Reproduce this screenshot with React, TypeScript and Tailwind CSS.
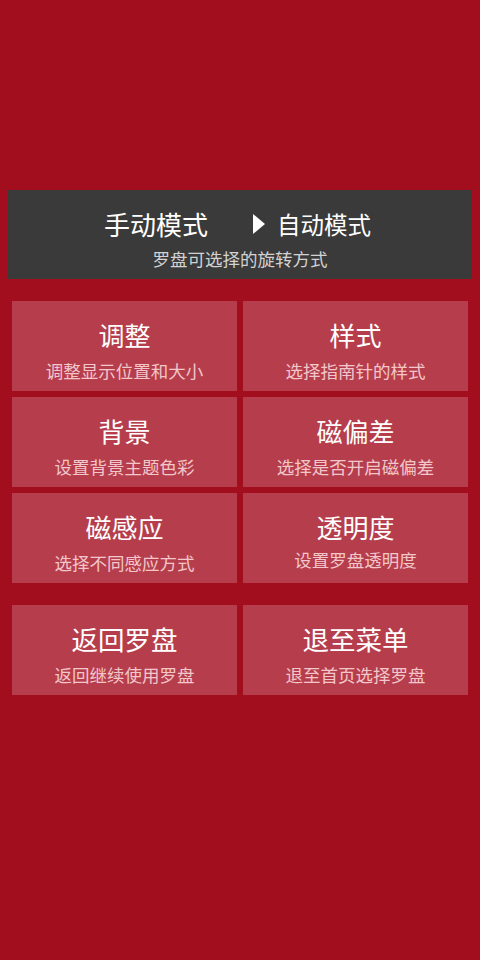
import React from 'react';

interface MenuItem {
  title: string;
  desc: string;
  tight?: boolean;
}

const rows: MenuItem[] = [
  { title: '调整', desc: '调整显示位置和大小' },
  { title: '样式', desc: '选择指南针的样式' },
  { title: '背景', desc: '设置背景主题色彩' },
  { title: '磁偏差', desc: '选择是否开启磁偏差' },
  { title: '磁感应', desc: '选择不同感应方式' },
  { title: '透明度', desc: '设置罗盘透明度', tight: true },
];

const bottom: MenuItem[] = [
  { title: '返回罗盘', desc: '返回继续使用罗盘' },
  { title: '退至菜单', desc: '退至首页选择罗盘' },
];

const MenuCard: React.FC<{ item: MenuItem; big?: boolean }> = ({ item, big }) => (
  <div className="flex h-[90px] flex-col items-center bg-[#b63e4c] pt-[21px]">
    <div className={`${big ? 'text-[26.5px]' : 'text-[26px]'} leading-[26px] text-white`}>{item.title}</div>
    <div
      className={`${item.tight ? 'mt-[11px]' : 'mt-[14px]'} text-[17.5px] leading-[18px] text-[#f2c6cb]`}
    >
      {item.desc}
    </div>
  </div>
);

export default function App() {
  return (
    <div
      className="flex min-h-[960px] w-full flex-col bg-[#a30e1f] pt-[190px]"
      style={{ fontFamily: '"Noto Sans CJK SC", "Noto Sans", sans-serif' }}
    >
      <div className="mx-2 flex h-[89px] flex-col bg-[#3a3a3a] pt-[21px]">
        <div className="flex h-[26px] items-center pl-[96px] text-white">
          <span className="text-[26px] leading-[26px]">手动模式</span>
          <svg className="ml-[45px] mr-[12px]" width="12" height="20" viewBox="0 0 12 20">
            <polygon points="0,0 12,10 0,20" fill="#ffffff" />
          </svg>
          <span className="text-[23.5px] leading-[26px]">自动模式</span>
        </div>
        <div className="mt-[13px] text-center text-[17.5px] leading-[18px] text-[#d2d2d2]">
          罗盘可选择的旋转方式
        </div>
      </div>

      <div className="mt-[22px] grid grid-cols-2 gap-[6px] px-3">
        {rows.map((item) => (
          <MenuCard key={item.title} item={item} />
        ))}
      </div>

      <div className="mt-[22px] grid grid-cols-2 gap-[6px] px-3">
        {bottom.map((item) => (
          <MenuCard key={item.title} item={item} big />
        ))}
      </div>
    </div>
  );
}
